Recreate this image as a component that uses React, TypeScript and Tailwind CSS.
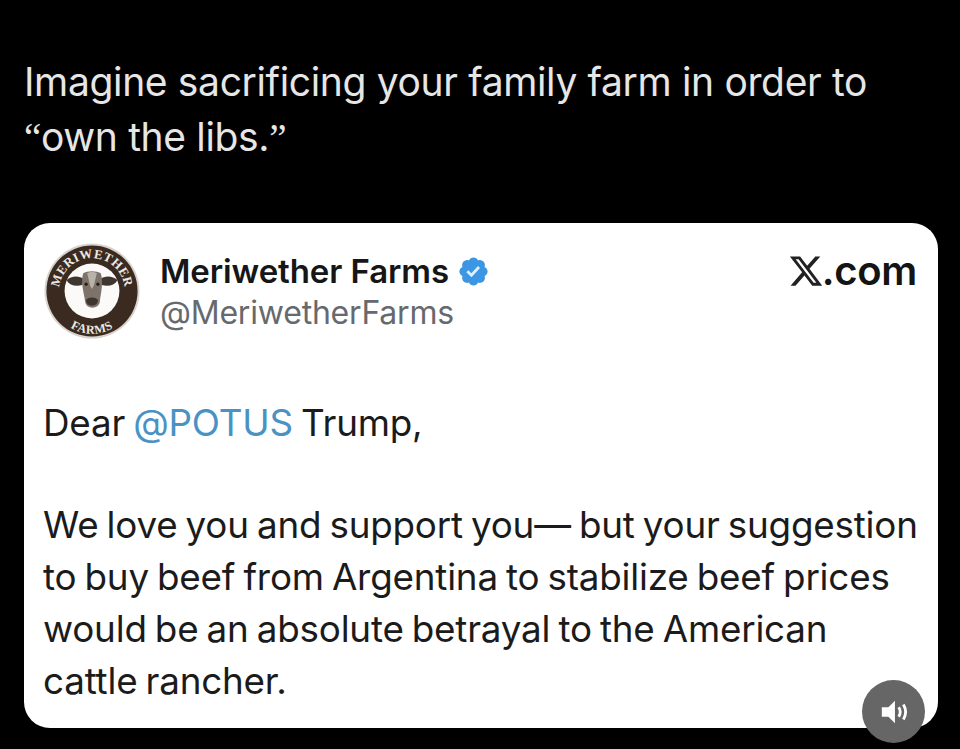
const FONT = "font-['Inter','Liberation_Sans',sans-serif]";

const FarmLogo = () => (
  <svg viewBox="0 0 100 100" className="w-[98px] h-[98px] shrink-0">
    <defs>
      <path id="topArc" d="M 50 83.5 A 33.5 33.5 0 1 1 50.01 83.5" />
      <path id="bottomArc" d="M 6.5 50 A 43.5 43.5 0 0 0 93.5 50" />
    </defs>
    <circle cx="50" cy="50" r="48.5" fill="#d8d3cd" />
    <circle cx="50" cy="50" r="46.5" fill="#3a2a1f" />
    <circle cx="50" cy="50" r="28" fill="#fbfaf8" />
    <text fontSize="13" fontWeight="700" fill="#efe9e1" fontFamily="'Liberation Serif',serif" letterSpacing="0.4">
      <textPath href="#topArc" startOffset="50%" textAnchor="middle">MERIWETHER</textPath>
    </text>
    <text fontSize="12.5" fontWeight="700" fill="#efe9e1" fontFamily="'Liberation Serif',serif" letterSpacing="0.6">
      <textPath href="#bottomArc" startOffset="50%" textAnchor="middle">FARMS</textPath>
    </text>
    {/* cow head */}
    <path d="M24 39 C29 34 37 34 42 38 L40 44 C33 46 27 44 24 39 Z" fill="#3f3630" />
    <path d="M76 39 C71 34 63 34 58 38 L60 44 C67 46 73 44 76 39 Z" fill="#3f3630" />
    <path d="M41 32 C45 29 55 29 59 32 C62 42 59 52 58 61 C57 69 44 69 43 61 C42 52 38 42 41 32 Z" fill="#7d736b" />
    <path d="M45 32 C47 38 47 44 50 48 C53 44 53 38 55 32 C52 30 48 30 45 32 Z" fill="#b9b2aa" />
    <circle cx="44" cy="43" r="1.6" fill="#231a14" />
    <circle cx="56" cy="43" r="1.6" fill="#231a14" />
    <path d="M44 59 C47 56 53 56 56 59 C57 67 43 67 44 59 Z" fill="#3f3630" />
  </svg>
);

const VerifiedBadge = () => (
  <svg viewBox="0 0 22 22" className="w-[33px] h-[33px] shrink-0">
    <path
      fill="#3b96e4"
      d="M20.396 11c-.018-.646-.215-1.275-.57-1.816-.354-.54-.852-.972-1.438-1.246.223-.607.27-1.264.14-1.897-.131-.634-.437-1.218-.882-1.687-.47-.445-1.053-.75-1.687-.882-.633-.13-1.29-.083-1.897.14-.273-.587-.704-1.086-1.245-1.44S11.647 1.62 11 1.604c-.646.017-1.273.213-1.813.568s-.969.854-1.24 1.44c-.608-.223-1.267-.272-1.902-.14-.635.13-1.22.436-1.69.882-.445.47-.749 1.055-.878 1.688-.13.633-.08 1.29.144 1.896-.587.274-1.087.705-1.443 1.245-.356.54-.555 1.17-.574 1.817.02.647.218 1.276.574 1.817.356.54.856.972 1.443 1.245-.224.606-.274 1.263-.144 1.896.13.634.433 1.218.877 1.688.47.443 1.054.747 1.687.878.633.132 1.29.084 1.897-.136.274.586.705 1.084 1.246 1.439.54.354 1.17.551 1.816.569.647-.016 1.276-.213 1.817-.567s.972-.854 1.245-1.44c.604.239 1.266.296 1.903.164.636-.132 1.22-.447 1.68-.907.46-.46.776-1.044.908-1.681s.075-1.299-.165-1.903c.586-.274 1.084-.705 1.439-1.246.354-.54.551-1.17.569-1.816z"
    />
    <path fill="#dff0fc" d="M9.662 14.85l-3.429-3.428 1.293-1.302 2.072 2.072 4.4-4.794 1.347 1.246z" />
  </svg>
);

const XMark = () => (
  <svg viewBox="0 0 24 24" className="w-[36px] h-[36px] shrink-0 -mr-[2px]">
    <path
      fill="#222222"
      d="M18.244 2.25h3.308l-7.227 8.26 8.502 11.24H16.17l-5.214-6.817L4.99 21.75H1.68l7.73-8.835L1.254 2.25H8.08l4.713 6.231zm-1.161 17.52h1.833L7.084 4.126H5.117z"
    />
  </svg>
);

const SoundButton = () => (
  <div className="absolute left-[862px] top-[680px] w-[63px] h-[63px] rounded-full bg-[#666666] flex items-center justify-center">
    <svg viewBox="0 0 32 32" className="w-[30px] h-[30px]">
      <path fill="#fff" d="M3 11 H10 L17 4 V28 L10 21 H3 Z" />
      <path d="M21 11 C23 14 23 18 21 21" stroke="#fff" strokeWidth="3" fill="none" />
      <path d="M26 8 C29 13 29 19 26 24" stroke="#fff" strokeWidth="3" fill="none" />
    </svg>
  </div>
);

export default function App() {
  return (
    <div className={`relative h-[749px] w-[960px] overflow-hidden bg-black ${FONT}`}>
      <div className="flex flex-col px-[24px] pt-[54px]">
        <p className="h-[169px] text-[39px] leading-[55px] tracking-[-0.35px] text-[#e6e6e6]">
          Imagine sacrificing your family farm in order to
          <br />
          <span className="font-['Liberation_Serif',serif]">“</span>own the libs.
          <span className="font-['Liberation_Serif',serif]">”</span>
        </p>
        <div className="h-[505px] w-[914px] rounded-[26px] bg-white pl-[19px] pr-[21px] pt-[19px]">
          <div className="flex items-start">
            <FarmLogo />
            <div className="ml-[19px] pt-[8px]">
              <div className="flex items-center gap-[8px]">
                <span className="text-[33px] leading-[42px] font-semibold tracking-[-0.1px] text-[#161616]">Meriwether Farms</span>
                <VerifiedBadge />
              </div>
              <div className="text-[32px] leading-[42px] tracking-[-0.2px] text-[#66696d]">@MeriwetherFarms</div>
            </div>
            <div className="ml-auto flex items-center pt-[6px]">
              <XMark />
              <span className="text-[40px] leading-[46px] font-semibold tracking-[-0.3px] text-[#141414]">.com</span>
            </div>
          </div>
          <div className="mt-[57px] whitespace-nowrap text-[36.8px] leading-[52px] tracking-[-0.2px] [word-spacing:-2px] text-[#1b1b1b]">
            <p>
              Dear <span className="text-[#4a92c4]">@POTUS</span> Trump,
            </p>
            <p className="mt-[50px]">
              We love you and support you— but your suggestion
              <br />
              to buy beef from Argentina to stabilize beef prices
              <br />
              would be an absolute betrayal to the American
              <br />
              cattle rancher.
            </p>
          </div>
        </div>
      </div>
      <SoundButton />
    </div>
  );
}
